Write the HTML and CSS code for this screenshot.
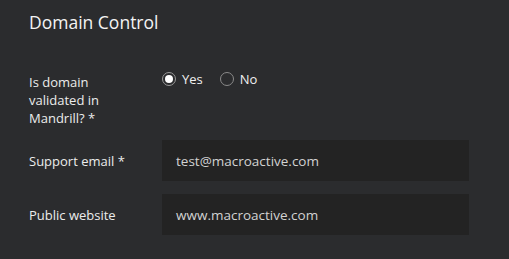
FILE: index.html
```html
<!DOCTYPE html>
<html>
<head>
<meta charset="utf-8">
<link rel="stylesheet" href="styles.css">
</head>
<body>
<div class="panel">
  <h2 class="title">Domain Control</h2>
  <div class="form">
    <div class="row row-radio">
      <label class="label">Is domain validated in Mandrill? *</label>
      <div class="radios">
        <label class="radio"><span class="dot checked"></span>Yes</label>
        <label class="radio"><span class="dot"></span>No</label>
      </div>
    </div>
    <div class="row">
      <label class="label">Support email *</label>
      <div class="input">test@macroactive.com</div>
    </div>
    <div class="row">
      <label class="label">Public website</label>
      <div class="input">www.macroactive.com</div>
    </div>
  </div>
</div>
</body>
</html>
```
FILE: styles.css
```css
html, body {
  margin: 0;
  padding: 0;
  background: #2b2c2e;
  height: 100%;
}
body {
  font-family: "Open Sans", "Noto Sans", sans-serif;
  color: #ececec;
}
.panel {
  padding: 9px 40px 0 29px;
}
.title {
  margin: 0;
  font-size: 17.5px;
  font-weight: 400;
  line-height: 26px;
  color: #f4f4f4;
}
.form {
  margin-top: 34px;
  display: flex;
  flex-direction: column;
  gap: 13px;
}
.row {
  display: grid;
  grid-template-columns: 133px 307px;
  align-items: center;
}
.row-radio {
  align-items: start;
}
.label {
  font-size: 13px;
  line-height: 18px;
  color: #ececec;
}
.row-radio .label {
  width: 90px;
  padding-top: 4px;
}
.radios {
  display: flex;
  gap: 17px;
  align-items: center;
}
.radio {
  display: flex;
  align-items: center;
  gap: 6px;
  font-size: 13px;
  line-height: 20px;
  color: #f0f0f0;
}
.dot {
  box-sizing: border-box;
  width: 14px;
  height: 14px;
  border-radius: 50%;
  border: 1px solid #8a8a8a;
  position: relative;
}
.dot.checked {
  border-color: #9a9a9a;
}
.dot.checked::after {
  content: "";
  position: absolute;
  left: 2px;
  top: 2px;
  width: 8px;
  height: 8px;
  border-radius: 50%;
  background: #ffffff;
}
.input {
  background: #232323;
  height: 41px;
  box-sizing: border-box;
  padding: 0 14px;
  display: flex;
  align-items: center;
  font-size: 13.5px;
  color: #d2d2d2;
}
```
